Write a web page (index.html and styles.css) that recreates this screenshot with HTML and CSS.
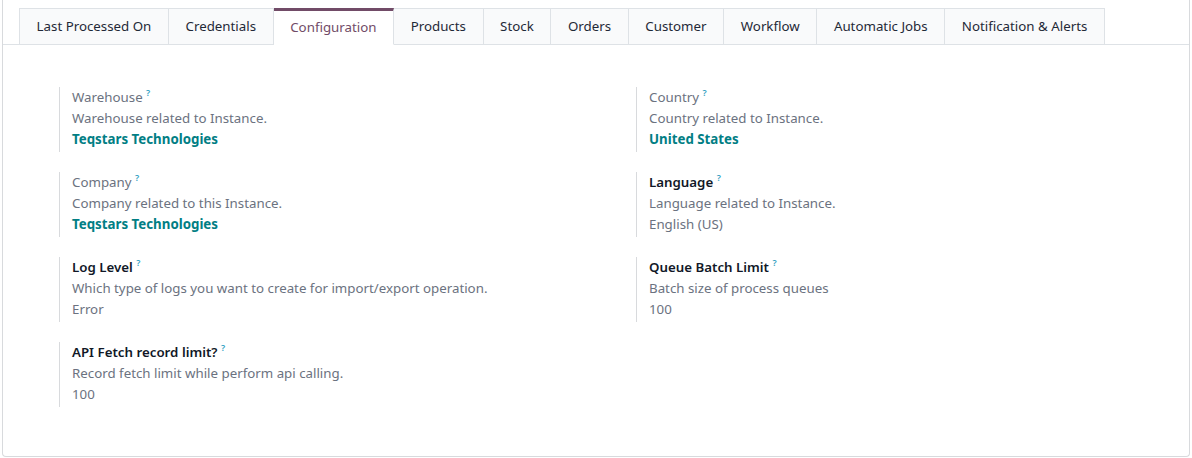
FILE: index.html
```html
<!DOCTYPE html>
<html lang="en">

<head>
    <meta charset="UTF-8">
    <title>Instance - Configuration</title>
    <link rel="stylesheet" href="styles.css">
</head>

<body>
    <div class="sheet">
        <ul class="tabs">
            <li class="tab">Last Processed On</li>
            <li class="tab">Credentials</li>
            <li class="tab active">Configuration</li>
            <li class="tab">Products</li>
            <li class="tab">Stock</li>
            <li class="tab">Orders</li>
            <li class="tab">Customer</li>
            <li class="tab">Workflow</li>
            <li class="tab">Automatic Jobs</li>
            <li class="tab">Notification &amp; Alerts</li>
        </ul>

        <div class="fields">
            <div class="field">
                <div class="label">Warehouse <sup>?</sup></div>
                <div class="help">Warehouse related to Instance.</div>
                <div class="value link">Teqstars Technologies</div>
            </div>
            <div class="field">
                <div class="label">Country <sup>?</sup></div>
                <div class="help">Country related to Instance.</div>
                <div class="value link">United States</div>
            </div>

            <div class="field">
                <div class="label">Company <sup>?</sup></div>
                <div class="help">Company related to this Instance.</div>
                <div class="value link">Teqstars Technologies</div>
            </div>
            <div class="field">
                <div class="label strong">Language <sup>?</sup></div>
                <div class="help">Language related to Instance.</div>
                <div class="value">English (US)</div>
            </div>

            <div class="field">
                <div class="label strong">Log Level <sup>?</sup></div>
                <div class="help">Which type of logs you want to create for import/export operation.</div>
                <div class="value">Error</div>
            </div>
            <div class="field">
                <div class="label strong">Queue Batch Limit <sup>?</sup></div>
                <div class="help">Batch size of process queues</div>
                <div class="value">100</div>
            </div>

            <div class="field">
                <div class="label strong">API Fetch record limit? <sup>?</sup></div>
                <div class="help">Record fetch limit while perform api calling.</div>
                <div class="value">100</div>
            </div>
        </div>
    </div>
</body>

</html>
```

FILE: styles.css
```css
* {
    margin: 0;
    padding: 0;
    box-sizing: border-box;
}

body {
    font-family: "Noto Sans", sans-serif;
    font-size: 13.3px;
    color: #374151;
    background: #fff;
    padding: 0 2px;
}

.sheet {
    border: 1px solid #d8dadd;
    border-top: none;
    border-radius: 0 0 4px 4px;
    height: 457px;
    padding-top: 8px;
}

.tabs {
    list-style: none;
    display: flex;
    padding-left: 16px;
    border-bottom: 1px solid #dee2e6;
}

.tab {
    padding: 0 16.6px;
    height: 37px;
    line-height: 35px;
    background: #f9fafb;
    border: 1px solid #dee2e6;
    border-left: none;
    margin-bottom: -1px;
    color: #1f2937;
}

.tab:first-child {
    border-left: 1px solid #dee2e6;
}

.tab.active {
    background: #fff;
    color: #714b67;
    border-top: 3px solid #714b67;
    border-bottom-color: #fff;
    line-height: 33px;
}

.fields {
    display: grid;
    grid-template-columns: 577px 1fr;
    row-gap: 20px;
    padding: 42px 0 0 56px;
}

.field {
    border-left: 1px solid #d8dadd;
    padding: 0 0 2px 12px;
    line-height: 21px;
}

.label,
.help,
.value {
    color: #6b7280;
}

.label.strong {
    color: #111827;
    font-weight: 600;
}

.label sup {
    font-size: 9px;
    line-height: 0;
    vertical-align: 0;
    position: relative;
    top: -6px;
    color: #2fa0c2;
    font-weight: 600;
}

.value.link {
    color: #017e84;
    font-weight: 700;
}
```
